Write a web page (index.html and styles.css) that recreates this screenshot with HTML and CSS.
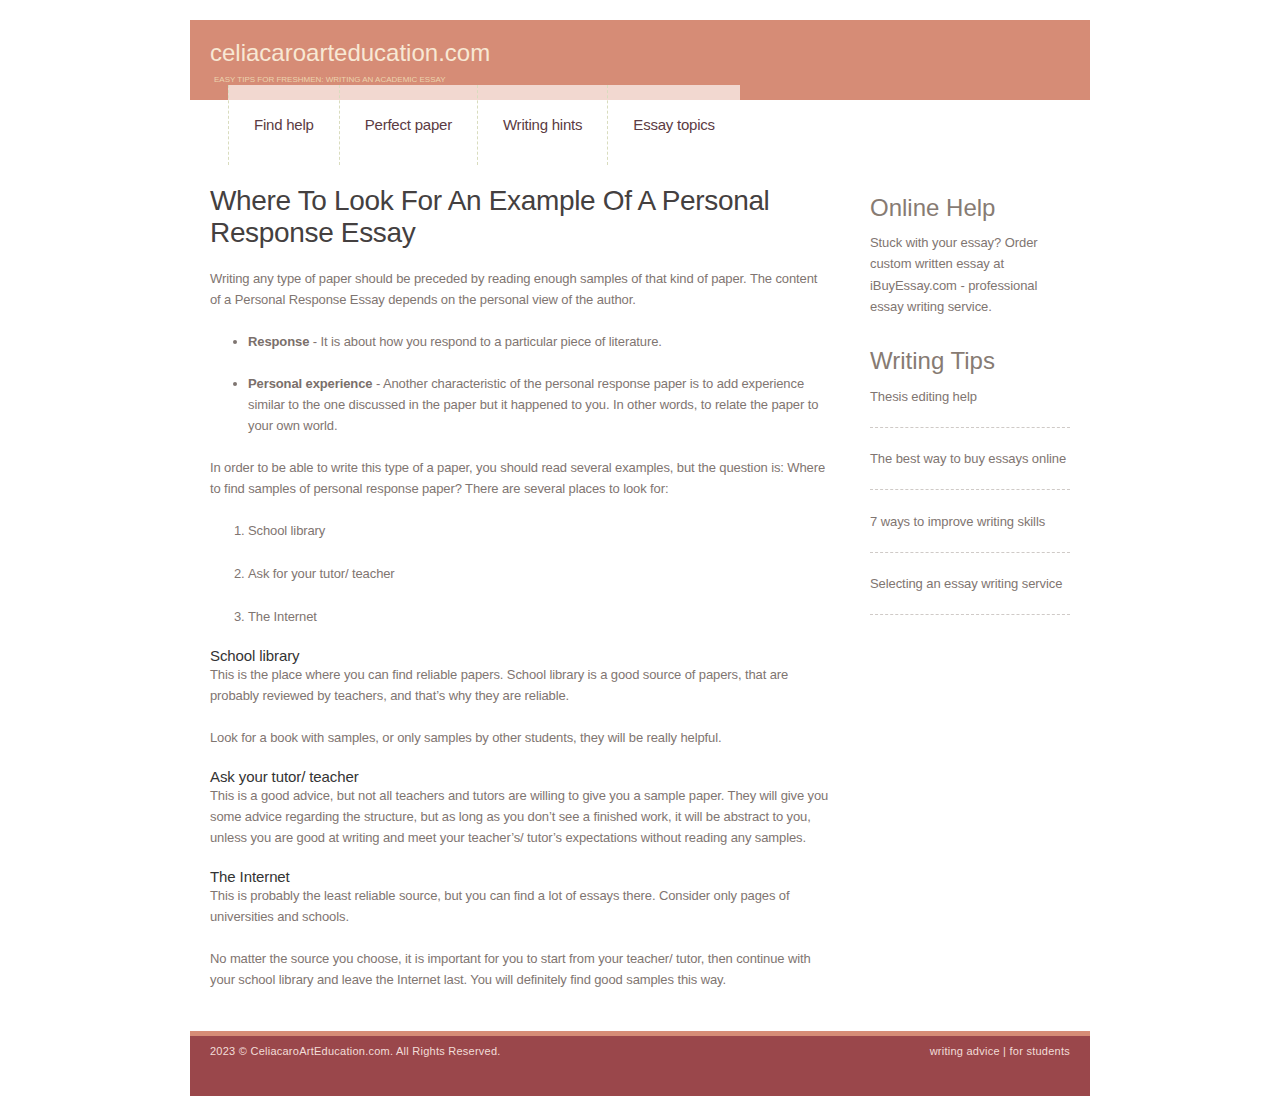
FILE: index.html
```html
<!DOCTYPE html>
<html lang="en">
<head>
<meta charset="utf-8">
<title>Where To Look For An Example Of A Personal Response Essay</title>
<link rel="stylesheet" href="styles.css">
</head>
<body>
<div class="page">
  <header class="header">
    <div class="brand">
      <a class="site-title" href="#">celiacaroarteducation.com</a>
      <div class="tagline">Easy tips for freshmen: writing an academic essay</div>
    </div>
    <nav class="nav">
      <a href="#" class="nav-item">Find help</a>
      <a href="#" class="nav-item">Perfect paper</a>
      <a href="#" class="nav-item">Writing hints</a>
      <a href="#" class="nav-item">Essay topics</a>
    </nav>
  </header>

  <div class="body">
    <main class="main">
      <h1>Where To Look For An Example Of A Personal Response Essay</h1>
      <p>Writing any type of paper should be preceded by reading enough samples of that kind of paper. The content of a Personal Response Essay depends on the personal view of the author.</p>
      <ul class="bullets">
        <li><strong>Response</strong> - It is about how you respond to a particular piece of literature.</li>
        <li><strong>Personal experience</strong> - Another characteristic of the personal response paper is to add experience similar to the one discussed in the paper but it happened to you. In other words, to relate the paper to your own world.</li>
      </ul>
      <p>In order to be able to write this type of a paper, you should read several examples, but the question is: Where to find samples of personal response paper? There are several places to look for:</p>
      <ol class="numbers">
        <li>School library</li>
        <li>Ask for your tutor/ teacher</li>
        <li>The Internet</li>
      </ol>
      <h3>School library</h3>
      <p>This is the place where you can find reliable papers. School library is a good source of papers, that are probably reviewed by teachers, and that’s why they are reliable.</p>
      <p>Look for a book with samples, or only samples by other students, they will be really helpful.</p>
      <h3>Ask your tutor/ teacher</h3>
      <p>This is a good advice, but not all teachers and tutors are willing to give you a sample paper. They will give you some advice regarding the structure, but as long as you don’t see a finished work, it will be abstract to you, unless you are good at writing and meet your teacher’s/ tutor’s expectations without reading any samples.</p>
      <h3>The Internet</h3>
      <p>This is probably the least reliable source, but you can find a lot of essays there. Consider only pages of universities and schools.</p>
      <p>No matter the source you choose, it is important for you to start from your teacher/ tutor, then continue with your school library and leave the Internet last. You will definitely find good samples this way.</p>
    </main>

    <aside class="sidebar">
      <section class="widget">
        <h2>Online Help</h2>
        <p>Stuck with your essay? Order custom written essay at iBuyEssay.com - professional essay writing service.</p>
      </section>
      <section class="widget">
        <h2>Writing Tips</h2>
        <ul class="tips">
          <li><a href="#">Thesis editing help</a></li>
          <li><a href="#">The best way to buy essays online</a></li>
          <li><a href="#">7 ways to improve writing skills</a></li>
          <li><a href="#">Selecting an essay writing service</a></li>
        </ul>
      </section>
    </aside>
  </div>

  <footer class="footer">
    <div class="copy">2023 © CeliacaroArtEducation.com. All Rights Reserved.</div>
    <div class="footer-links"><a href="#">writing advice</a> | <a href="#">for students</a></div>
  </footer>
</div>
</body>
</html>
```

FILE: styles.css
```css
html, body {
  margin: 0;
  padding: 0;
  background: #ffffff;
}

body {
  font-family: "Liberation Sans", Arial, sans-serif;
  font-size: 13px;
  line-height: 21px;
  color: #7f7571;
}

a {
  text-decoration: none;
  color: inherit;
}

.page {
  width: 900px;
  margin: 20px auto 0;
}

/* Header */
.header {
  position: relative;
  height: 145px;
}

.brand {
  background: #d68c76;
  height: 80px;
  padding: 0 20px;
  box-sizing: border-box;
}

.site-title {
  display: block;
  padding-top: 18px;
  font-size: 24px;
  line-height: 30px;
  color: #f8e8d4;
}

.tagline {
  padding-left: 4px;
  margin-top: 7px;
  font-size: 8px;
  line-height: 10px;
  text-transform: uppercase;
  color: #ecd3ad;
}

.nav {
  position: absolute;
  left: 38px;
  top: 65px;
  display: flex;
  background: linear-gradient(#f2d8d0 0, #f2d8d0 15px, transparent 15px);
}

.nav-item {
  display: block;
  height: 80px;
  line-height: 80px;
  padding: 0 25px;
  font-size: 15px;
  letter-spacing: -0.22px;
  color: #5b3b43;
  border-left: 1px dashed #d9dcbe;
}

/* Body */
.body {
  display: flex;
  justify-content: space-between;
  padding: 20px 20px 20px;
}

.main {
  width: 620px;
  letter-spacing: -0.11px;
}

.main h1 {
  margin: 0 0 19px;
  font-size: 28px;
  line-height: 32px;
  font-weight: normal;
  letter-spacing: -0.34px;
  color: #444040;
}

.main p {
  margin: 0 0 21px;
}

.main h3 {
  margin: 0 0 1px;
  font-size: 15px;
  line-height: 15px;
  font-weight: normal;
  letter-spacing: -0.1px;
  color: #333;
}

.bullets,
.numbers {
  margin: 0 0 21px;
  padding-left: 38px;
}

.bullets li,
.numbers li {
  margin-bottom: 21px;
}

.numbers li {
  margin-bottom: 22px;
}

.bullets li:last-child,
.numbers li:last-child {
  margin-bottom: 0;
}

.bullets strong {
  color: #7a6f6b;
}

/* Sidebar */
.sidebar {
  width: 200px;
  padding-top: 9px;
  letter-spacing: -0.08px;
}

.widget {
  margin-bottom: 30px;
}

.widget h2 {
  margin: 0 0 10px;
  font-size: 24px;
  line-height: 28px;
  font-weight: normal;
  letter-spacing: 0;
  color: #877b73;
}

.widget p {
  margin: 0;
  line-height: 21.3px;
}

.tips {
  list-style: none;
  margin: 0;
  padding: 1px 0 0;
}

.tips li {
  padding: 20.3px 0 20px;
  border-bottom: 1px dashed #cfcac7;
  line-height: 21px;
}

.tips li:first-child {
  padding-top: 0;
}

/* Footer */
.footer {
  height: 60px;
  background: #9a474b;
  border-top: 5px solid #d68c76;
  display: flex;
  justify-content: space-between;
  padding: 5px 20px 0;
  font-size: 11px;
  line-height: 21px;
  letter-spacing: 0.25px;
  color: #f2ddd8;
}
```
